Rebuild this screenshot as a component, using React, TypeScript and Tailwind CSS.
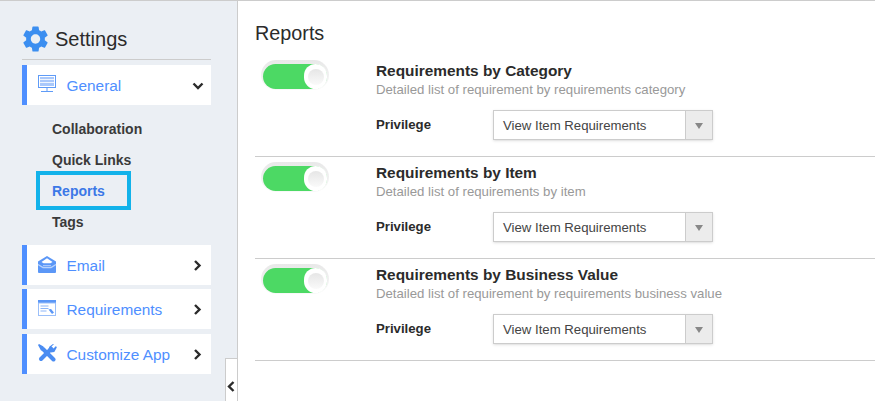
import React from "react";

const blue = "text-[#4f8fff]";

function Gear() {
  return (
    <svg width="25" height="26" viewBox="2.6 2 18.8 20" className="shrink-0">
      <path
        fill="#3b8ef0"
        d="M19.14 12.94c.04-.3.06-.61.06-.94 0-.32-.02-.64-.07-.94l2.03-1.58c.18-.14.23-.41.12-.61l-1.92-3.32c-.12-.22-.37-.29-.59-.22l-2.39.96c-.5-.38-1.03-.7-1.62-.94l-.36-2.54c-.04-.24-.24-.41-.48-.41h-3.84c-.24 0-.43.17-.47.41l-.36 2.54c-.59.24-1.13.57-1.62.94l-2.39-.96c-.22-.08-.47 0-.59.22L2.74 8.87c-.12.21-.08.47.12.61l2.03 1.58c-.05.3-.09.63-.09.94s.02.64.07.94l-2.03 1.58c-.18.14-.23.41-.12.61l1.92 3.32c.12.22.37.29.59.22l2.39-.96c.5.38 1.03.7 1.62.94l.36 2.54c.05.24.24.41.48.41h3.84c.24 0 .44-.17.47-.41l.36-2.54c.59-.24 1.13-.56 1.62-.94l2.39.96c.22.08.47 0 .59-.22l1.92-3.32c.12-.22.07-.47-.12-.61l-2.01-1.58zM12 15.6c-1.98 0-3.6-1.62-3.6-3.6s1.62-3.6 3.6-3.6 3.6 1.62 3.6 3.6-1.62 3.6-3.6 3.6z"
      />
    </svg>
  );
}

function Monitor() {
  return (
    <svg width="19" height="18" viewBox="0 0 19 18" fill="none">
      <rect x="0.5" y="0.5" width="17" height="12" stroke="#5f9bf7" />
      <rect x="2" y="2" width="14" height="9" fill="#a9c8fb" />
      <path d="M2 4.500h14M2 7.500h14" stroke="#ffffff" strokeWidth="0.800" />
      <path d="M9 13v3M3 16.500h12" stroke="#5f9bf7" />
    </svg>
  );
}

function Mail() {
  return (
    <svg width="19" height="17" viewBox="0 0 19 17">
      <path fill="#5b97f7" d="M9 0 18 5.500V16a1 1 0 0 1-1 1H1a1 1 0 0 1-1-1V5.500L9 0Z" />
      <path fill="#fff" d="M9 2.300 3.500 6 5.500 7.300h7L14.500 6 9 2.300Z" />
      <path stroke="#b9d3fc" strokeWidth="1.300" fill="none" d="M0 8.500 5 11.500h8l5-3" />
      <path fill="#a9c8fb" d="M5 9h8v1H5z" />
    </svg>
  );
}

function Req() {
  return (
    <svg width="18" height="16" viewBox="0 0 18 16">
      <rect width="18" height="16" fill="#9bbff9" />
      <rect width="18" height="2.500" fill="#5b97f7" />
      <rect x="1" y="3.500" width="16" height="11.500" fill="#fff" />
      <path d="M2.500 6h8M2.500 8.500h8M2.500 11h6" stroke="#8db6f7" strokeWidth="1.200" />
      <path d="M10.500 9.500 13 9l3 3.500-2 1.500-3.500-4.500Z" fill="#5b97f7" />
    </svg>
  );
}

function Tools() {
  return (
    <svg width="19" height="18" viewBox="0 0 19 18" fill="none">
      <path stroke="#4a8cf2" strokeWidth="4" d="M5 5 15.500 15.500" strokeLinecap="round" />
      <path stroke="#4a8cf2" strokeWidth="4" d="M3 15 13 5" strokeLinecap="round" />
      <path fill="#4a8cf2" d="M11.500 2.500 15 0l1 0-2.500 2.500L15.500 4.500 18 2l.8 1.500-2.500 4.500-3.500.5-2.500-3zM1 0 5.500 2.500V6L3 6.500 0 1Z" />
    </svg>
  );
}

function Chevron({ dir }: { dir: "down" | "right" | "left" }) {
  const d =
    dir === "down"
      ? "M1.500 3.500 6 8l4.500-4.500"
      : dir === "right"
        ? "M3 1l4.500 4.500L3 10"
        : "M7.500 1 3 5.500 7.500 10";
  return (
    <svg width="12" height="11" viewBox="0 0 12 11" fill="none" stroke="#2b2b2b" strokeWidth="2.400" className="shrink-0">
      <path d={d} />
    </svg>
  );
}

function NavItem({ icon, label, dir, className }: { icon: React.ReactNode; label: string; dir: "down" | "right"; className?: string }) {
  return (
    <div className={`h-10 bg-white border-l-[5px] border-[#4f8fff] flex items-center pl-[11px] pr-[7px] ${className ?? ""}`}>
      <div className="w-[28.5px] flex items-center -mt-[2px]">{icon}</div>
      <span className={`flex-1 pt-[2px] text-[15.4px] ${blue}`}>{label}</span>
      <Chevron dir={dir} />
    </div>
  );
}

function Toggle() {
  return (
    <div className="ml-[5px] w-[68px] h-[30px] rounded-full bg-linear-to-b from-[#e8e8e8] to-[#f8f8f8] pt-[4px] pl-[2px] shrink-0">
      <div className="w-[64px] h-[25px] rounded-full bg-[#4cd964] flex justify-end">
        <div className="w-[23px] h-[25px] rounded-full bg-white flex items-center justify-center">
          <div className="w-[16px] h-[16px] rounded-full bg-linear-to-b from-[#e6e6e6] to-[#fafafa]" />
        </div>
      </div>
    </div>
  );
}

function Row({ title, desc, first }: { title: string; desc: string; first?: boolean }) {
  return (
    <div className={`border-b border-[#cccccc] flex pl-[1px] ${first ? "h-[97px]" : "h-[102px] pt-[5px]"}`}>
      <Toggle />
      <div className="ml-[47px] flex-1">
        <div className="h-[22px] flex items-end text-[15.4px] leading-[22px] font-bold text-[#2b2b2b]">{title}</div>
        <div className="text-[13.2px] leading-[15px] text-[#999999]">{desc}</div>
        <div className="flex items-center mt-[13px]">
          <div className="w-[117px] text-[13.2px] font-bold text-[#2b2b2b]">Privilege</div>
          <div className="w-[220px] h-[30px] border border-[#cccccc] shadow-sm flex items-center bg-white">
            <span className="flex-1 pl-[9px] pt-[1px] text-[13.2px] text-[#444444]">View Item Requirements</span>
            <div className="w-[27px] h-full bg-[#ececec] border-l border-[#cccccc] flex items-center justify-center">
              <div className="w-0 h-0 border-l-[4px] border-r-[4px] border-t-[6px] border-l-transparent border-r-transparent border-t-[#888888] mt-[2px]" />
            </div>
          </div>
        </div>
      </div>
    </div>
  );
}

export default function App() {
  return (
    <div
      className="w-[875px] h-[401px] overflow-hidden flex bg-white border-t border-[#cccccc] text-[#2b2b2b]"
      style={{ fontFamily: '"Liberation Sans", Arial, sans-serif' }}
    >
      <aside className="relative w-[238px] shrink-0 bg-[#ebeff4] border-r border-[#cccccc] pl-[22px] pr-[26px]">
        <div className="h-[59px] border-b border-[#cccccc] flex items-end pb-[7px] gap-[7px] pl-[1px]">
          <Gear />
          <span className="text-[20px] leading-[28px] -mb-[1px] text-[#2b2b2b]">Settings</span>
        </div>
        <NavItem className="mt-[5px]" icon={<Monitor />} label="General" dir="down" />
        <div className="pt-[9px] pl-[30px] text-[14px] font-bold text-[#3a3a3a]">
          <div className="h-[31px] flex items-center">Collaboration</div>
          <div className="h-[31px] flex items-center">Quick Links</div>
          <div className="h-[31px] flex items-center relative text-[#3b78e7]">
            Reports
            <div className="absolute left-[-16px] top-[-5px] w-[95px] h-[39px] border-[4px] border-[#12b2ea]" />
          </div>
          <div className="h-[31px] flex items-center">Tags</div>
        </div>
        <NavItem className="mt-[7px]" icon={<Mail />} label="Email" dir="right" />
        <NavItem className="mt-[4px]" icon={<Req />} label="Requirements" dir="right" />
        <NavItem className="mt-[5px]" icon={<Tools />} label="Customize App" dir="right" />
        <div className="absolute right-0 top-[357px] w-[12px] h-[50px] bg-white border-l border-t border-[#cccccc] flex items-start justify-center pt-[22px]">
          <Chevron dir="left" />
        </div>
      </aside>
      <main className="flex-1 pl-[17px]">
        <h1 className="text-[19.800px] leading-[28px] mt-[18px] text-[#2b2b2b] h-[41px]">Reports</h1>
        <Row first title="Requirements by Category" desc="Detailed list of requirement by requirements category" />
        <Row title="Requirements by Item" desc="Detailed list of requirements by item" />
        <Row title="Requirements by Business Value" desc="Detailed list of requirement by requirements business value" />
      </main>
    </div>
  );
}
